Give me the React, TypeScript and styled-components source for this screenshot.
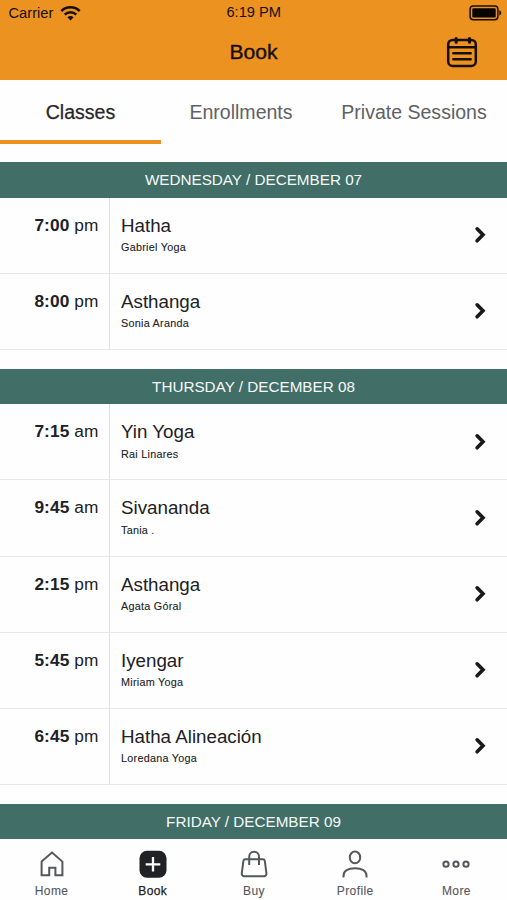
import React from "react";
import styled, { createGlobalStyle } from "styled-components";

const Global = createGlobalStyle`
  * { box-sizing: border-box; }
  body {
    margin: 0;
    background: #fff;
    font-family: "Liberation Sans", Arial, sans-serif;
    color: #202124;
    overflow: hidden;
  }
`;

const Screen = styled.div`
  width: 507px;
  height: 900px;
  display: flex;
  flex-direction: column;
  background: #fefefe;
  overflow: hidden;
`;

const Header = styled.header`
  height: 80.4px;
  flex: none;
  background: #ec9220;
  color: #170f06;
`;

const StatusBar = styled.div`
  height: 25px;
  display: grid;
  grid-template-columns: 1fr auto 1fr;
  align-items: center;
  padding: 0 5px 0 8.5px;
  font-size: 14.7px;
`;

const Carrier = styled.div`
  display: flex;
  align-items: center;
  gap: 7px;
`;

const Clock = styled.div`
  font-size: 14.7px;
  padding-right: 3px;
  line-height: 20px;
  margin-top: -1px;
`;

const Battery = styled.svg`
  justify-self: end;
`;

const TitleBar = styled.div`
  height: 53px;
  display: grid;
  grid-template-columns: 1fr auto 1fr;
  align-items: center;
  padding: 0 29px;
`;

const Title = styled.h1`
  grid-column: 2;
  margin: 0;
  font-size: 21.1px;
  font-weight: 400;
  line-height: 24px;
  -webkit-text-stroke: 0.4px currentColor;
`;

const CalendarIcon = styled.svg`
  justify-self: end;
`;

const Tabs = styled.nav`
  height: 63.2px;
  flex: none;
  display: flex;
`;

const Tab = styled.div<{ $active?: boolean; $width: number }>`
  width: ${(p) => p.$width}px;
  padding-top: 20px;
  text-align: center;
  font-size: 19.55px;
  line-height: 24px;
  color: ${(p) => (p.$active ? "#26272a" : "#606165")};
  border-bottom: 4px solid ${(p) => (p.$active ? "#ec9220" : "transparent")};
  -webkit-text-stroke: ${(p) => (p.$active ? "0.25px" : "0")} currentColor;
`;

const Schedule = styled.main`
  flex: 1;
  min-height: 0;
  overflow: hidden;
`;

const Day = styled.section`
  padding-top: 18.7px;
`;

const DayTitle = styled.h2`
  margin: 0;
  height: 35.5px;
  background: #416e67;
  color: #f6faf9;
  text-align: center;
  font-size: 15.25px;
  font-weight: 400;
  line-height: 35.5px;
`;

const Row = styled.div`
  height: 76.15px;
  display: grid;
  grid-template-columns: 110px 1fr 42px;
  border-bottom: 1px solid #e7e8e8;
`;

const Time = styled.div`
  padding: 17px 10.5px 0 0;
  text-align: right;
  font-size: 17.3px;
  line-height: 20px;
  letter-spacing: 0.1px;
  border-right: 1.5px solid #dfe0e1;
`;

const Info = styled.div`
  padding: 17px 0 0 11px;
`;

const ClassName = styled.div`
  font-size: 18.75px;
  line-height: 22px;
`;

const Teacher = styled.div`
  margin-top: 3.5px;
  font-size: 10.8px;
  line-height: 14px;
  letter-spacing: 0.26px;
  -webkit-text-stroke: 0.1px currentColor;
`;

const Chevron = styled.svg`
  align-self: center;
`;

const BottomBar = styled.footer`
  height: 60.8px;
  flex: none;
  display: grid;
  grid-template-columns: repeat(5, 1fr);
  padding-left: 1px;
  background: #fefefe;
`;

const NavItem = styled.div<{ $active?: boolean }>`
  display: flex;
  flex-direction: column;
  align-items: center;
  padding-top: 9.5px;
  font-size: 12px;
  line-height: 15px;
  letter-spacing: 0.4px;
  color: ${(p) => (p.$active ? "#202226" : "#55575b")};
  -webkit-text-stroke: ${(p) => (p.$active ? "0.25px" : "0.1px")} currentColor;
`;

const NavIcon = styled.svg`
  display: block;
  margin-bottom: 5.5px;
  fill: none;
  stroke: currentColor;
  stroke-width: 2;
  stroke-linejoin: round;
`;

type Session = [time: string, period: string, name: string, teacher: string];

const days: { title: string; sessions: Session[] }[] = [
  {
    title: "WEDNESDAY / DECEMBER 07",
    sessions: [
      ["7:00", "pm", "Hatha", "Gabriel Yoga"],
      ["8:00", "pm", "Asthanga", "Sonia Aranda"],
    ],
  },
  {
    title: "THURSDAY / DECEMBER 08",
    sessions: [
      ["7:15", "am", "Yin Yoga", "Rai Linares"],
      ["9:45", "am", "Sivananda", "Tania ."],
      ["2:15", "pm", "Asthanga", "Agata Góral"],
      ["5:45", "pm", "Iyengar", "Miriam Yoga"],
      ["6:45", "pm", "Hatha Alineación", "Loredana Yoga"],
    ],
  },
  { title: "FRIDAY / DECEMBER 09", sessions: [] },
];

const navItems = [
  {
    label: "Home",
    icon: <path d="M4.6 12.6 15 3.6 25.4 12.6V26.3h-7v-7.6h-6.2v7.6H4.6Z" strokeLinejoin="miter" />,
  },
  {
    label: "Book",
    active: true,
    icon: (
      <>
        <rect x="1.5" y="1.7" width="27" height="27" rx="7.5" fill="#202226" stroke="none" />
        <path d="M15 8v14.6M7.7 15.3h14.6" stroke="#fff" strokeWidth="2.3" />
      </>
    ),
  },
  {
    label: "Buy",
    icon: (
      <>
        <path d="M6.3 10.3h17.6c1 0 1.7.6 1.9 1.6l1.6 12.3c.2 1.7-.8 3-2.4 3H5.2c-1.6 0-2.6-1.3-2.4-3l1.6-12.3c.2-1 .9-1.6 1.9-1.6Z" />
        <path d="M10.2 16V7.9c0-3.1 2-5.2 4.9-5.2s4.9 2.1 4.9 5.2V16" />
      </>
    ),
  },
  {
    label: "Profile",
    icon: (
      <>
        <ellipse cx="15" cy="8.4" rx="5.2" ry="5.9" />
        <path d="M3.5 28.5v-1.6c0-5 4.7-7.7 11.5-7.7s11.5 2.7 11.5 7.7v1.6" />
      </>
    ),
  },
  {
    label: "More",
    icon: (
      <>
        <circle cx="5" cy="15.2" r="2.6" />
        <circle cx="15" cy="15.2" r="2.6" />
        <circle cx="25" cy="15.2" r="2.6" />
      </>
    ),
  },
];

export default function App() {
  return (
    <>
      <Global />
      <Screen>
        <Header>
          <StatusBar>
            <Carrier>
              Carrier
              <svg width="21" height="16" viewBox="0 0 21 16" fill="none" stroke="#170f06" strokeWidth="2.5">
                <path d="M1.3 6.1C6.4 1 14.6 1 19.7 6.1" />
                <path d="M4.7 9.7c3.2-3.2 8.4-3.2 11.6 0" />
                <path d="M10.5 15.4 7.4 12.3c1.7-1.6 4.5-1.6 6.2 0Z" fill="#170f06" stroke="none" />
              </svg>
            </Carrier>
            <Clock>6:19 PM</Clock>
            <Battery width="33" height="16" viewBox="0 0 33 16">
              <rect x="1.1" y="1.1" width="27.8" height="13.6" rx="3.2" fill="none" stroke="#170f06" strokeWidth="1.5" />
              <rect x="3.3" y="3.3" width="23.4" height="9.2" rx="1.2" fill="#080502" />
              <path d="M30.3 5.3c2.5.8 2.5 4.4 0 5.2Z" fill="#170f06" />
            </Battery>
          </StatusBar>
          <TitleBar>
            <Title>Book</Title>
            <CalendarIcon width="32" height="32" viewBox="0 0 32 32" fill="none" stroke="#170f06" strokeWidth="2.5" strokeLinecap="round">
              <rect x="2.2" y="3.9" width="27.6" height="26" rx="4.5" />
              <path d="M2.5 11.2h27M7.3 17.2h17.4M7.3 23.3h17.4" />
              <path d="M10.2 2.5v3.7M23.5 2.5v3.7" strokeWidth="3.2" />
            </CalendarIcon>
          </TitleBar>
        </Header>
        <Tabs>
          <Tab $active $width={161}>Classes</Tab>
          <Tab $width={160}>Enrollments</Tab>
          <Tab $width={186}>Private Sessions</Tab>
        </Tabs>
        <Schedule>
          {days.map((day) => (
            <Day key={day.title}>
              <DayTitle>{day.title}</DayTitle>
              {day.sessions.map(([time, period, name, teacher]) => (
                <Row key={time + period}>
                  <Time>
                    <b>{time}</b> {period}
                  </Time>
                  <Info>
                    <ClassName>{name}</ClassName>
                    <Teacher>{teacher}</Teacher>
                  </Info>
                  <Chevron width="22" height="22" viewBox="0 0 22 22" fill="none" stroke="#18191c" strokeWidth="3.6" strokeLinecap="round">
                    <path d="M12.1 4.8 18 10.8 12.1 16.8" />
                  </Chevron>
                </Row>
              ))}
            </Day>
          ))}
        </Schedule>
        <BottomBar>
          {navItems.map((item) => (
            <NavItem key={item.label} $active={item.active}>
              <NavIcon width="30" height="30" viewBox="0 0 30 30">
                {item.icon}
              </NavIcon>
              {item.label}
            </NavItem>
          ))}
        </BottomBar>
      </Screen>
    </>
  );
}
